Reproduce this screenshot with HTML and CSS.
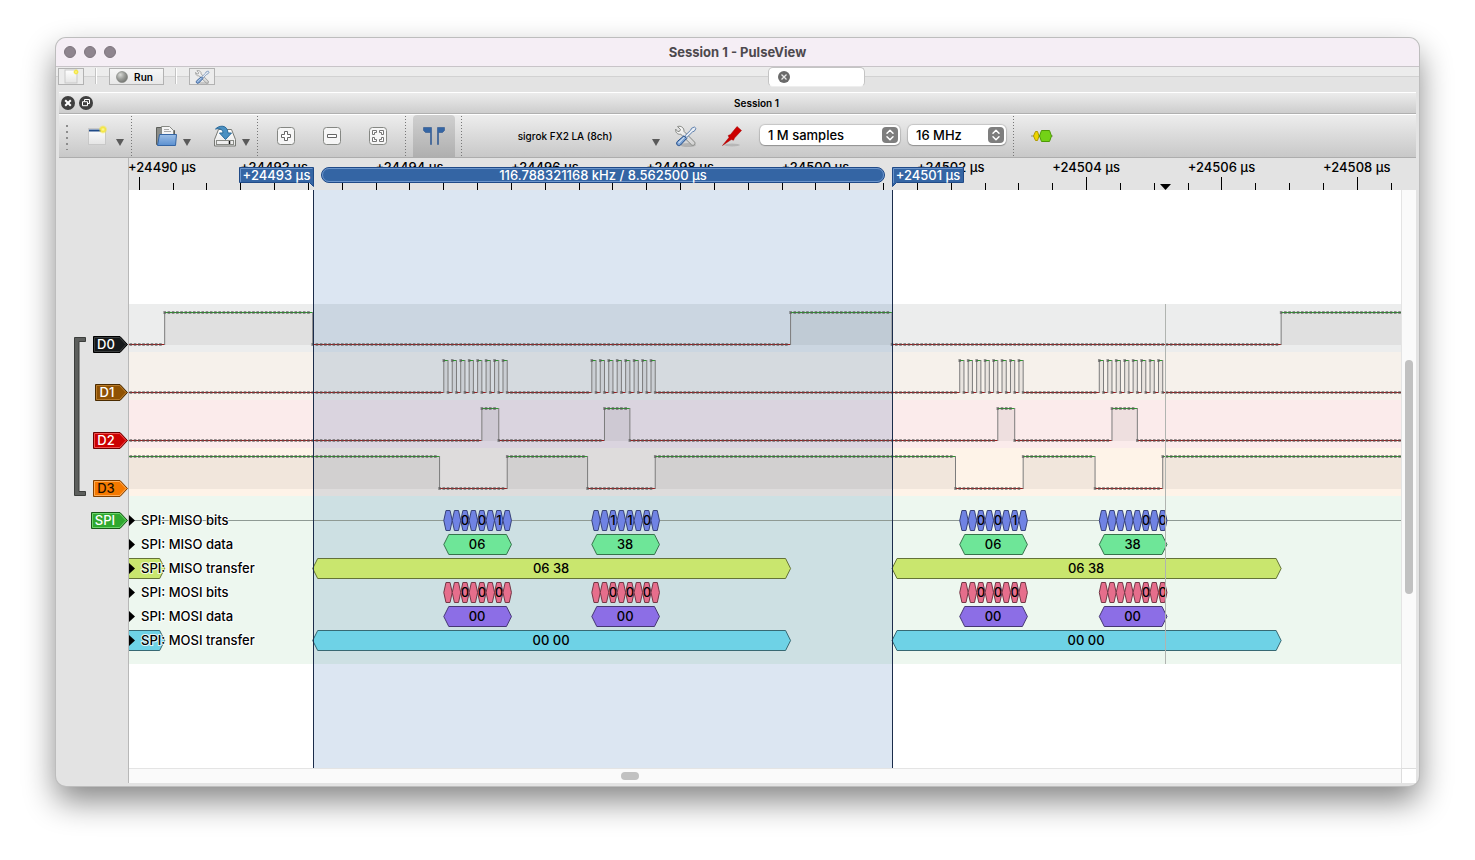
FILE: index.html
```html
<!DOCTYPE html>
<html lang="en">
<head>
<meta charset="utf-8">
<title>Session 1 - PulseView</title>
<link rel="stylesheet" href="styles.css">
</head>
<body>
<svg class="defs" aria-hidden="true">
  <defs>
    <linearGradient id="steel" x1="0" y1="0" x2="1" y2="1"><stop offset="0" stop-color="#fff"/><stop offset="1" stop-color="#cfcfcf"/></linearGradient>
    <linearGradient id="folder" x1="0" y1="0" x2="0" y2="1"><stop offset="0" stop-color="#9dbfe6"/><stop offset="1" stop-color="#5a8fd0"/></linearGradient>
    <linearGradient id="paper" x1="0" y1="0" x2="0" y2="1"><stop offset="0" stop-color="#fff"/><stop offset="1" stop-color="#e4e4e4"/></linearGradient>
    <radialGradient id="glow"><stop offset="0" stop-color="#fff9a0"/><stop offset=".5" stop-color="#f4e63c"/><stop offset="1" stop-color="#f4e63c" stop-opacity="0"/></radialGradient>
    <radialGradient id="ball" cx=".35" cy=".3" r=".8"><stop offset="0" stop-color="#d8dad6"/><stop offset=".5" stop-color="#9a9c98"/><stop offset="1" stop-color="#6d6f6b"/></radialGradient>
    <symbol id="tools" viewBox="0 0 24 24">
      <ellipse cx="14" cy="21" rx="8" ry="2" fill="#000" opacity=".15"/>
      <path d="M3.5 2.6 6.500 5.400 5.700 7.200 3.800 7.600 1.700 5.100C1.200 8.200 3.300 10.700 6.800 10.300L17.600 20.900C19.600 22.300 21.900 20 20.600 18.100L10 7.400C10.300 4 7.200 1.300 3.500 2.600Z" fill="url(#steel)" stroke="#858783"/>
      <path d="M20.400 3 22 4.500 20.300 7.200 18.600 7.800 12.800 13.500 11 11.700 16.800 6 17.500 4.300Z" fill="#e9eef5" stroke="#4f74a5" stroke-width=".9"/>
      <path d="M10 11.800 12.700 14.500 6.500 21C4.500 22.900 1.100 20.300 3.300 17.500Z" fill="#7ca3d4" stroke="#204a87"/>
      <path d="M9.900 13.600 4.900 18.800" stroke="#c9dcf2" stroke-width="1.300" stroke-linecap="round"/>
    </symbol>
    <symbol id="down" viewBox="0 0 8 7"><path d="M0 0h8L4 7z" fill="#5a5a5a"/></symbol>
    <symbol id="updown" viewBox="0 0 16 16"><rect width="16" height="16" rx="4" fill="#7e7e7e"/><path d="M5 6.300 8 3.300l3 3M5 9.700l3 3 3-3" fill="none" stroke="#fff" stroke-width="1.500" stroke-linecap="round" stroke-linejoin="round"/></symbol>
  </defs>
</svg>
<main class="window">
  <header class="titlebar">
    <div class="lights">
      <button class="light" aria-label="Close"></button><button class="light" aria-label="Minimise"></button><button class="light" aria-label="Zoom"></button>
    </div>
    <h1 class="title">Session 1 - PulseView</h1>
  </header>

  <div class="mainbar">
    <div class="mainbar-tools">
      <button class="flat" aria-label="New session"><svg width="18" height="15" viewBox="0 0 18 15"><rect x="3" y="1" width="12" height="13" fill="url(#paper)" stroke="#c9c9c9"/><circle cx="14" cy="3" r="3" fill="url(#glow)"/></svg></button>
      <span class="rule"></span>
      <button class="flat run"><svg width="12" height="12" viewBox="0 0 12 12"><circle cx="6" cy="6" r="5.500" fill="url(#ball)" stroke="#7b7d79" stroke-width=".6"/></svg>Run</button>
      <span class="rule"></span>
      <button class="flat" aria-label="Settings"><svg width="17" height="16"><use href="#tools"/></svg></button>
    </div>
    <div class="tab"><button class="tab-close" aria-label="Close tab"><svg width="12" height="12" viewBox="0 0 12 12"><circle cx="6" cy="6" r="6" fill="#6a6a6a"/><path d="M3.500 3.500l5 5m0-5l-5 5" stroke="#e8e8e8" stroke-width="1.300"/></svg></button></div>
  </div>

  <section class="dock">
    <div class="dock-title">
      <button class="dock-btn" aria-label="Close session"><svg width="14" height="14" viewBox="0 0 14 14"><circle cx="7" cy="7" r="7" fill="#3f3f3f"/><path d="M4.200 4.200l5.600 5.600m0-5.600L4.200 9.800" stroke="#fff" stroke-width="2"/></svg></button>
      <button class="dock-btn" aria-label="Float session"><svg width="14" height="14" viewBox="0 0 14 14"><circle cx="7" cy="7" r="7" fill="#3f3f3f"/><path d="M5.500 5.500v-2h5v4h-2M3.500 5.700h5v4h-5z" fill="none" stroke="#fff"/></svg></button>
      <h2 class="dock-name">Session 1</h2>
    </div>

    <div class="toolbar">
      <span class="grip"></span>
      <button class="tool split new" aria-label="New view"><svg width="22" height="22" viewBox="0 0 22 22"><rect x="2.500" y="3.500" width="17" height="16" fill="url(#paper)" stroke="#c8c8c8"/><path d="M3 5.500h12" stroke="#204a87" stroke-width="2"/><circle cx="17" cy="4.500" r="4.500" fill="url(#glow)"/></svg><svg class="arrow" width="8" height="7"><use href="#down"/></svg></button>
      <span class="dots"></span>
      <button class="tool split open" aria-label="Open"><svg width="22" height="22" viewBox="0 0 22 22"><path d="M1.500 19.500v-17h6l2 3h10v14z" fill="#8b8d89" stroke="#5c5e5a"/><path d="M6.500 9V1.500h8l4 4V10h-12z" fill="#f5f5f5" stroke="#888a85"/><path d="M9 4.500h5m-5 2h7" stroke="#aaa"/><path d="M4.500 9.500h17l-1 11h-18z" fill="url(#folder)" stroke="#3465a4"/></svg><svg class="arrow" width="8" height="7"><use href="#down"/></svg></button>
      <button class="tool split save" aria-label="Save"><svg width="22" height="22" viewBox="0 0 22 22"><path d="M4.500 4.500h13l4 10v6.500h-21v-6.500z" fill="url(#paper)" stroke="#777974"/><rect x="2.500" y="15.500" width="17" height="4" fill="#eee" stroke="#888a85"/><path d="M15.500 16v3" stroke="#111" stroke-width="1.500"/><path d="M1.500 4C5 .2 13.500-.8 14 8h3.500l-6 6.500L5.500 8H9C9 4.300 5.500 3 1.500 4z" fill="#4a90c2" stroke="#2a6a9a"/></svg><svg class="arrow" width="8" height="7"><use href="#down"/></svg></button>
      <span class="dots"></span>
      <button class="tool" aria-label="Zoom in"><svg width="18" height="18" viewBox="0 0 18 18"><rect x=".5" y=".5" width="17" height="17" rx="3" fill="#f6f6f6" stroke="#858783"/><path d="M7.500 4.500h3v3h3v3h-3v3h-3v-3h-3v-3h3z" fill="#fff" stroke="#666"/></svg></button>
      <button class="tool" aria-label="Zoom out"><svg width="18" height="18" viewBox="0 0 18 18"><rect x=".5" y=".5" width="17" height="17" rx="3" fill="#f6f6f6" stroke="#858783"/><path d="M4.500 7.500h9v3h-9z" fill="#fff" stroke="#666"/></svg></button>
      <button class="tool" aria-label="Zoom to fit"><svg width="18" height="18" viewBox="0 0 18 18"><rect x=".5" y=".5" width="17" height="17" rx="3" fill="#f6f6f6" stroke="#858783"/><path d="M3.500 3.500h4v2h-2v2h-2zM10.500 3.500h4v4h-2v-2h-2zM3.500 10.500h2v2h2v2h-4zM12.500 10.500h2v4h-4v-2h2z" fill="#fff" stroke="#666" stroke-width=".9"/></svg></button>
      <span class="dots dots-fit"></span>
      <button class="tool cursors" aria-label="Show cursors" aria-pressed="true"><svg width="24" height="20" viewBox="0 0 24 20"><path d="M1.500 1.500h8v17h-1v-12L7 6.500H3.500l-2-2zM22.500 1.500h-7v17h1v-12h4l2-2z" fill="#3465a4" stroke="#204a87" stroke-width=".5"/></svg></button>
      <span class="dots dots-cursor"></span>
      <button class="tool device"><span class="device-name">sigrok FX2 LA (8ch)</span><svg class="arrow" width="8" height="7"><use href="#down"/></svg></button>
      <button class="tool" aria-label="Configure device"><svg width="24" height="24"><use href="#tools"/></svg></button>
      <button class="tool" aria-label="Configure channels"><svg width="22" height="22" viewBox="0 0 22 22"><ellipse cx="11" cy="20" rx="8" ry="1.500" fill="#000" opacity=".13"/><path d="M1.500 20.500 8 12.500 7.200 10.500 9.500 9.500 16 1.500 20.500 5.500 13.500 13 12.500 15.200 10.300 14.500Z" fill="#cc0000" stroke="#a40000" stroke-width=".5"/></svg></button>
      <label class="picker picker-samples"><select aria-label="Sample count"><option>1 M samples</option></select><svg class="picker-mark" width="16" height="16"><use href="#updown"/></svg></label>
      <label class="picker picker-rate"><select aria-label="Sample rate"><option>16 MHz</option></select><svg class="picker-mark" width="16" height="16"><use href="#updown"/></svg></label>
      <span class="dots dots-rate"></span>
      <button class="tool decoder" aria-label="Add decoder"><svg width="22" height="14" viewBox="0 0 22 14"><path d="M0 7h22" stroke="#888a85"/><path d="M2.500 7l2-4.500h2L8 7l-1.500 4.500h-2z" fill="#edd400" stroke="#b09a00"/><path d="M8.500 7l2-5.500h8L20.500 7l-2 5.500h-8z" fill="#73d216" stroke="#4e9a06"/></svg></button>
    </div>

    <div class="view">
      <svg id="gutter" class="gutter" role="group" aria-label="Channels"></svg>
      <svg id="ruler" class="ruler" role="img" aria-label="Time ruler"></svg>
      <svg id="plot" class="plot" role="img" aria-label="Signal traces"></svg>
      <div class="vbar"><div class="vthumb"></div></div>
      <div class="hbar"><div class="hthumb"></div></div>
      <div class="corner"></div>
    </div>
  </section>
</main>
<script src="plot.js"></script>
</body>
</html>
```
FILE: styles.css
```css
* { box-sizing: border-box; }
body {
  margin: 0;
  min-height: 100vh;
  padding: 38px 56px 74px;
  display: flex;
  background: #fff;
  color: #000;
  font: 500 13px/16px Inter, "Liberation Sans", sans-serif;
  overflow-x: hidden;
}
button, select { font: inherit; color: inherit; }
button { border: 0; padding: 0; background: none; }
svg { display: block; }
.defs { position: absolute; width: 0; height: 0; }

.window {
  flex: 1;
  min-width: 0;
  display: flex;
  flex-direction: column;
  border-radius: 10px;
  background: #e3e3e3;
  overflow: hidden;
  padding-bottom: 3px;
  box-shadow: 0 0 0 1px #bdbdbd, 0 15px 32px rgba(0, 0, 0, .48);
}
.titlebar {
  display: grid;
  grid-template-columns: 80px 1fr 80px;
  align-items: center;
  height: 29px;
  background: #f5eef5;
  border-bottom: 1px solid #c8c4c8;
}
.lights { display: flex; gap: 8px; padding-left: 8px; }
.light { width: 12px; height: 12px; border-radius: 50%; background: #8e858e; border: 1px solid #7d757d; }
.title { margin: 0; font-size: 13px; font-weight: 700; color: #4d494d; text-align: center; }

.mainbar {
  position: relative;
  display: flex;
  height: 25px;
  padding-left: 2px;
  background: linear-gradient(#ececec 9px, #d2d2d2 9px, #d2d2d2 10px, #e3e3e3 10px);
}
.mainbar-tools { display: flex; align-items: flex-start; gap: 12px; padding-top: 1px; }
.flat {
  display: flex;
  align-items: center;
  justify-content: center;
  gap: 6px;
  width: 26px;
  height: 17px;
  border: 1px solid #b2b2b2;
  background: #ececec;
  font-size: 10px;
  font-weight: 600;
  line-height: 14px;
}
.run { width: 55px; padding-right: 4px; background: linear-gradient(#f6f6f6, #e8e8e8); }
.rule { width: 1px; height: 16px; background: #fff; box-shadow: -1px 0 #c4c4c4; }
.tab {
  position: absolute;
  left: calc(50% + 30px);
  top: 0;
  width: 97px;
  height: 20px;
  padding: 3px 9px;
  border: 1px solid #c4c4c4;
  border-bottom-color: #eee;
  border-radius: 5px;
  background: #fff;
}
.tab-close { display: block; }

.dock { flex: 1; display: flex; flex-direction: column; padding: 0 3px; min-width: 0; }
.dock-title {
  display: flex;
  align-items: center;
  gap: 4px;
  height: 22px;
  padding: 0 0 1px 2px;
  border-top: 1px solid #fff;
  border-bottom: 1px solid #b0b0b0;
  background: linear-gradient(#ececec, #cdcdcd);
}
.dock-btn { width: 14px; height: 14px; }
.dock-name { flex: 1; margin: 0; padding-top: 1px; font-size: 10px; font-weight: 600; line-height: 14px; text-align: center; }

.toolbar {
  display: flex;
  align-items: center;
  height: 44px;
  border-top: 1px solid #fff;
  border-bottom: 1px solid #adadad;
  background: linear-gradient(#ededed, #c8c8c8);
}
.grip { width: 16px; height: 27px; background: radial-gradient(circle, #8c8c8c 1px, transparent 1px) 0 0 / 16px 6px; }
.dots { width: 1px; height: 40px; background: repeating-linear-gradient(#777 0 1px, transparent 1px 3px); }
.tool { display: flex; flex: none; align-items: center; justify-content: center; width: 46px; height: 42px; }
.split { gap: 8px; }
.split .arrow, .device .arrow { margin-top: 12px; }
.new { width: 56px; padding-left: 3px; }
.open { width: 60px; gap: 6px; padding-left: 22px; }
.save { width: 65px; gap: 6px; padding-left: 14px; }
.save + .dots { margin-right: 5px; }
.dots-fit { margin: 0 7px 0 4px; }
.cursors { width: 42px; border-radius: 4px 4px 0 0; background: rgba(0, 0, 0, .12); }
.dots-cursor { margin-left: 6px; }
.device { width: 201px; justify-content: flex-end; padding-right: 3px; }
.device-name { flex: 1; padding-left: 16px; font-size: 10px; line-height: 14px; text-align: center; }
.picker { position: relative; display: block; margin-bottom: 2px; }
.picker select {
  display: block;
  appearance: none;
  width: 100%;
  height: 20px;
  padding: 0 22px 0 8px;
  border: 0;
  border-radius: 5px;
  background: #fff;
  box-shadow: 0 0 1px 1px rgba(0, 0, 0, .14), 0 1px 1px rgba(0, 0, 0, .2);
}
.picker-mark { position: absolute; right: 2px; top: 2px; pointer-events: none; }
.picker-samples { width: 140px; margin-left: 5px; margin-right: 8px; }
.picker-rate { width: 98px; margin-right: 7px; }
.decoder { margin-left: 5px; }

.view {
  flex: 1;
  display: grid;
  grid-template-columns: 70px minmax(0, 1fr) 15px;
  grid-template-rows: 32px minmax(578px, 1fr) 15px;
}
.view text { font: 500 13px Inter, "Liberation Sans", sans-serif; text-anchor: middle; }
.gutter { grid-row: 1 / 4; grid-column: 1; width: 100%; height: 100%; border-right: 1px solid #b8b8b8; overflow: visible; }
.gutter .tag-text { fill: #fff; }
.gutter .tag-dark { fill: #1c1000; }
.ruler { grid-row: 1; grid-column: 2; width: 100%; height: 100%; overflow: visible; }
.ruler .on-blue { fill: #fff; }
.plot { grid-row: 2; grid-column: 2; width: 100%; height: 100%; background: #fff; }
.plot .row-name { text-anchor: start; stroke: #fff; stroke-width: 2px; stroke-opacity: .8; paint-order: stroke; }
.vbar { grid-row: 2; grid-column: 3; background: #fafafa; border-left: 1px solid #e4e4e4; padding: 170px 3px 0; }
.vthumb { height: 234px; border-radius: 4px; background: #c1c1c1; }
.hbar { grid-row: 3; grid-column: 2; background: #fafafa; border-top: 1px solid #e4e4e4; padding: 3px 0 0 492px; }
.hthumb { width: 18px; height: 8px; border-radius: 4px; background: #c1c1c1; }
.corner { grid-row: 3; grid-column: 3; background: #fff; border: solid #ddd; border-width: 1px 0 0 1px; }
```
FILE: plot.js
```js
// Time axis: 16 samples per microsecond, sample 0 lies at +24490 µs.
const ORIGIN = 10.3;
const STEP = 4.229;
const SAMPLES = 600;
const px = s => ORIGIN + s * STEP;

const NS = 'http://www.w3.org/2000/svg';
function add(parent, name, attrs, text) {
  const el = document.createElementNS(NS, name);
  for (const k in attrs) el.setAttribute(k, attrs[k]);
  if (text !== undefined) el.textContent = text;
  parent.appendChild(el);
  return el;
}

const CURSOR_A = 184.5;
const CURSOR_B = 763.5;
const HOVER = 1036;

// ---- ruler ----
const ruler = document.getElementById('ruler');
for (let i = 0; i < 38; i++) {
  const x = Math.round(px(i * 8) - 0.5);
  const major = i % 4 === 0;
  add(ruler, 'rect', { x, y: major ? 19 : 25, width: 1, height: major ? 13 : 7 });
  if (major) {
    add(ruler, 'text', { x: i ? px(i * 8) - 0.5 : 33, y: 14 }, '+' + (24490 + i / 2) + ' µs');
  }
}
const blue = { fill: '#3465a4', stroke: '#204a87' };
add(ruler, 'path', { d: 'M110.500 9.500h74v19l-4-4h-70z', ...blue });
add(ruler, 'path', { d: 'M111.500 24V10.500h72', fill: 'none', stroke: '#6d96cc' });
add(ruler, 'text', { x: 147.5, y: 22, class: 'on-blue' }, '+24493 µs');
add(ruler, 'path', { d: 'M763.500 9.500h71v15h-67l-4 4z', ...blue });
add(ruler, 'path', { d: 'M764.500 25V10.500h69', fill: 'none', stroke: '#6d96cc' });
add(ruler, 'text', { x: 799, y: 22, class: 'on-blue' }, '+24501 µs');
add(ruler, 'rect', { x: 192.5, y: 9.5, width: 563, height: 15, rx: 7.5, ...blue });
add(ruler, 'rect', { x: 193.5, y: 10.5, width: 561, height: 13, rx: 6.5, fill: 'none', stroke: '#6d96cc' });
add(ruler, 'text', { x: 474, y: 22, class: 'on-blue' }, '116.788321168 kHz / 8.562500 µs');
add(ruler, 'path', { d: 'M1031 26h11l-5.500 6z' });

// ---- traces ----
const plot = document.getElementById('plot');
add(plot, 'rect', { x: CURSOR_A, y: 0, width: CURSOR_B - CURSOR_A, height: '100%', fill: '#dce6f2' });

const clock = starts => starts.flatMap(s => Array.from({ length: 16 }, (_, i) => s + i));
const channels = [
  { name: 'D0', tint: 'rgba(10,30,30,.078)', start: 0, edges: [6, 41, 154, 178, 270] },
  { name: 'D1', tint: 'rgba(143,82,2,.08)', start: 0, edges: clock([72, 107, 194, 227]) },
  { name: 'D2', tint: 'rgba(204,0,0,.08)', start: 0, edges: [81, 85, 110, 116, 203, 207, 230, 236] },
  { name: 'D3', tint: 'rgba(245,121,0,.09)', start: 1, edges: [71, 87, 106, 122, 193, 209, 226, 242] }
];

channels.forEach((ch, n) => {
  const top = 114 + n * 48;
  const hi = top + 8;
  const lo = top + 40;
  add(plot, 'rect', { x: 0, y: top, width: '100%', height: 48, fill: ch.tint });
  const bounds = [-3, ...ch.edges, SAMPLES];
  let level = ch.start;
  let dots = '';
  for (let i = 0; i + 1 < bounds.length; i++) {
    const x1 = px(bounds[i]);
    const w = px(bounds[i + 1]) - x1;
    const y = level ? hi : lo;
    if (level) add(plot, 'rect', { x: x1, y: hi, width: w, height: 33, fill: 'rgba(0,0,0,.05)' });
    add(plot, 'rect', { x: x1, y, width: w, height: 1, fill: level ? '#2c9a2c' : '#9a1c1c' });
    if (i) add(plot, 'rect', { x: x1 - 0.5, y: hi, width: 1, height: 33, fill: '#7c7c7c' });
    for (let s = bounds[i]; s < bounds[i + 1]; s++) dots += `M${(px(s) - 1.3).toFixed(2)} ${y - 1}h2.6v3h-2.6z`;
    level = 1 - level;
  }
  add(plot, 'path', { d: dots, fill: '#555', 'fill-opacity': 0.62 });
});

// ---- decoder rows ----
add(plot, 'rect', { x: 0, y: 306, width: '100%', height: 168, fill: 'rgba(50,165,70,.085)' });
add(plot, 'rect', { x: 0, y: 330, width: '100%', height: 1, fill: '#8f9a94' });

function hexagon(a, b, mid, inset, fill, stroke) {
  const x1 = px(a), x2 = px(b);
  add(plot, 'path', {
    d: `M${x1} ${mid}L${x1 + inset} ${mid - 10}H${x2 - inset}L${x2} ${mid}L${x2 - inset} ${mid + 10}H${x1 + inset}Z`,
    fill, stroke
  });
}
function label(a, b, mid, text) {
  add(plot, 'text', { x: (px(a) + px(b)) / 2 - 0.5, y: mid + 4.5 }, text);
}

const words = [72, 107, 194, 227];
const transfers = [[-60, 6], [41, 154], [178, 270]];
const shown = [[2, 4, 6], [2, 4, 6], [2, 4, 6], [5, 7]];
const lines = [
  { name: 'MISO', bits: ['001', '110', '001', '00'], data: ['06', '38', '06', '38'], all: '06 38',
    colors: [['#7083e4', '#38427a'], ['#6ee698', '#37734c'], ['#c9e66e', '#647337']] },
  { name: 'MOSI', bits: ['000', '000', '000', '00'], data: ['00', '00', '00', '00'], all: '00 00',
    colors: [['#e66e8c', '#733746'], ['#8c6ee6', '#463773'], ['#6ed2e6', '#376973']] }
];

lines.forEach((line, n) => {
  const y = 330.5 + n * 72;
  words.forEach((start, w) => {
    for (let b = 0; b < 8; b++) {
      const a = start + b * 2;
      hexagon(a, a + 2, y, 2.2, ...line.colors[0]);
      const k = shown[w].indexOf(b);
      if (k >= 0) {
        const box = add(plot, 'svg', { x: px(a) + 0.8, y: y - 10, width: 7, height: 20 });
        add(box, 'text', { x: 3.5, y: 14.5 }, line.bits[w][k]);
      }
    }
    hexagon(start, start + 16, y + 24, 5, ...line.colors[1]);
    label(start, start + 16, y + 24, line.data[w]);
  });
  transfers.forEach(([a, b], i) => {
    hexagon(a, b, y + 48, 5, ...line.colors[2]);
    if (i) label(a, b, y + 48, line.all);
  });
  ['bits', 'data', 'transfer'].forEach((kind, r) => {
    const mid = y + r * 24;
    add(plot, 'path', { d: `M0 ${mid - 5.5}l6 5.500l-6 5.500z` });
    add(plot, 'text', { x: 12, y: mid + 4.5, class: 'row-name' }, `SPI: ${line.name} ${kind}`);
  });
});

add(plot, 'rect', { x: CURSOR_A - 0.5, y: 0, width: 1, height: '100%', fill: '#1b2c4a' });
add(plot, 'rect', { x: CURSOR_B - 0.5, y: 0, width: 1, height: '100%', fill: '#1b2c4a' });
add(plot, 'rect', { x: HOVER, y: 114, width: 1, height: 360, fill: '#b0b4b0' });

// ---- channel tags ----
const gutter = document.getElementById('gutter');
add(gutter, 'path', { d: 'M26.500 179.500h-11v158h11v-4h-6.500v-150h6.500z', fill: '#5d5f5d', stroke: '#3c3e3c' });
const tags = [
  ['D0', 186, 34, '#16191a', '#000', '#3a3d3e'],
  ['D1', 234, 36, '#8f5202', '#4a2b01', '#b87b2c'],
  ['D2', 282, 34, '#cc0000', '#6b0000', '#ef5050'],
  ['D3', 330, 34, '#f57900', '#803f00', '#ffac58'],
  ['SPI', 362, 32, '#2fa82f', '#175817', '#6cd56c']
];
for (const [name, mid, left, fill, stroke, light] of tags) {
  const y = mid + 0.5, x = left + 0.5;
  add(gutter, 'path', { d: `M${x} ${y - 8}H61L68.500 ${y}L61 ${y + 8}H${x}Z`, fill, stroke });
  add(gutter, 'path', { d: `M${x + 1} ${y - 7}H60.500L67 ${y}L60.500 ${y + 7}H${x + 1}Z`, fill: 'none', stroke: light });
  add(gutter, 'text', { x: (left + 60) / 2, y: y + 4.5, class: name === 'D3' ? 'tag-dark' : 'tag-text' }, name);
}
```
